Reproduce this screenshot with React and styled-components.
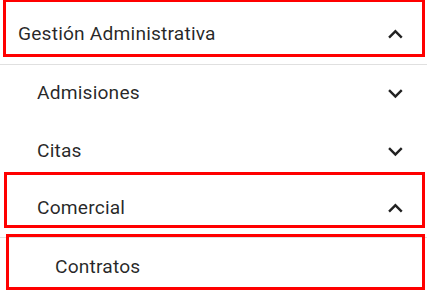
import React from 'react';
import styled, {createGlobalStyle} from "styled-components";

const GlobalStyle = createGlobalStyle`
  html, body {
    margin: 0;
    padding: 0;
    background: #fff;
    font-family: Roboto, "Liberation Sans", sans-serif;
  }
`;

const ExpandMore = () => (
	<svg viewBox="0 0 24 24" width="28.8" height="28.8" fill="currentColor">
		<path d="M16.59 8.59 12 13.17 7.41 8.59 6 10l6 6 6-6z" />
	</svg>
);

const ExpandLess = () => (
	<svg viewBox="0 0 24 24" width="28.8" height="28.8" fill="currentColor">
		<path d="m12 8-6 6 1.41 1.41L12 10.83l4.59 4.58L18 14z" />
	</svg>
);

// red annotation frames drawn over some rows
const Row = ({label, level, open, arrow = true, frame}) => (
	<Item $level={level}>
		<Label>{label}</Label>
		{arrow && <IconBox>{open ? <ExpandLess /> : <ExpandMore />}</IconBox>}
		{frame && <Frame $top={frame.top} $bottom={frame.bottom} $left={frame.left} />}
	</Item>
);

const App = () => {
	return (<>
			<GlobalStyle />
			<Menu>
				<Row label="Gestión Administrativa" level={0} open frame={{top: -7, bottom: 7, left: 3}} />
				<Divider />
				<Nested>
					<Row label="Admisiones" level={1} />
					<Row label="Citas" level={1} />
					<Row label="Comercial" level={1} open frame={{top: -8, bottom: 9, left: 4}} />
					<Divider />
					<Row label="Contratos" level={2} arrow={false} frame={{top: -4, bottom: 6, left: 6}} />
				</Nested>
			</Menu>
		</>
	);
};

export default App;

const Menu = styled.nav`
  width: 427px;
  padding-top: 6px;
  display: flex;
  flex-direction: column;
`;

const Nested = styled.div`
  display: flex;
  flex-direction: column;
`;

const Item = styled.div`
  position: relative;
  display: flex;
  align-items: center;
  box-sizing: border-box;
  height: 57.6px;
  padding: 0 17.5px 0 ${({$level}) => [18, 37, 55][$level]}px;
  color: rgba(0, 0, 0, 0.85);
`;

const Label = styled.span`
  flex: 1;
  font-size: 19.2px;
  line-height: 1.5;
  letter-spacing: 0.18px;
  font-weight: 400;
`;

const IconBox = styled.span`
  display: flex;
  align-items: center;
  justify-content: center;
  width: 28.8px;
  height: 28.8px;
  color: rgba(0, 0, 0, 0.87);
`;

const Divider = styled.hr`
  margin: 0;
  border: none;
  height: 1px;
  background: rgba(0, 0, 0, 0.12);
`;

const Frame = styled.div`
  position: absolute;
  top: ${({$top}) => $top}px;
  bottom: ${({$bottom}) => $bottom}px;
  left: ${({$left}) => $left}px;
  right: 2px;
  border: 3px solid #ff0000;
  pointer-events: none;
`;
